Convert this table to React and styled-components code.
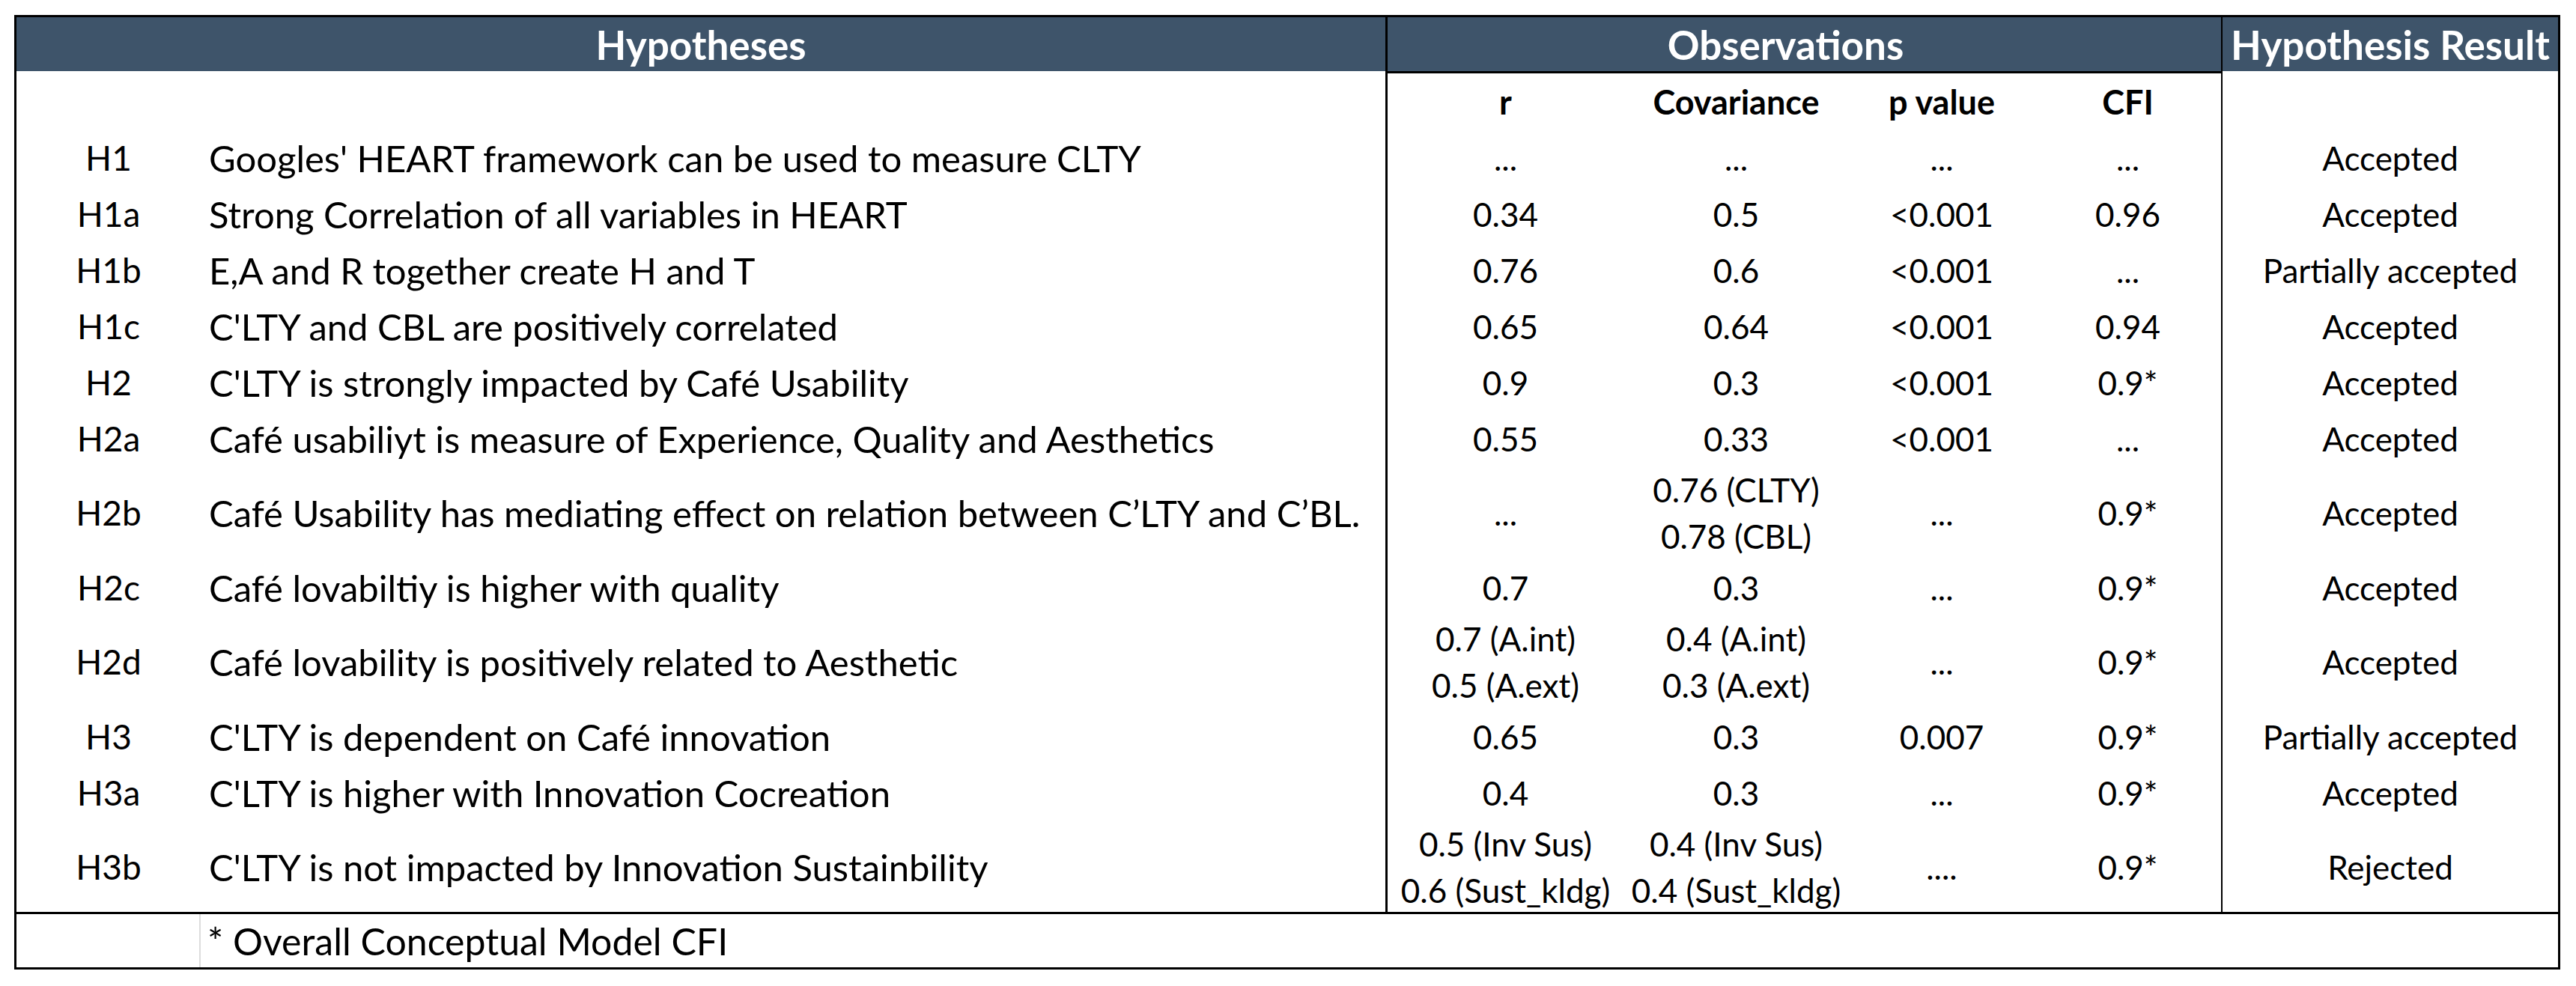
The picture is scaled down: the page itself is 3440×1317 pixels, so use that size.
import React from 'react'
import styled, { createGlobalStyle } from 'styled-components'

const GlobalStyle = createGlobalStyle`
  body {
    margin: 0;
    background: #ffffff;
    font-family: Lato, "Liberation Sans", sans-serif;
    color: #000000;
  }
`

const COLS = '246px 1582px 318px 301px 248px 249px 450px'

const Sheet = styled.div`
  margin: 20px 0 0 19px;
  width: 3400px;
  box-sizing: border-box;
  border: 3px solid #000;
`

const Row = styled.div`
  display: grid;
  grid-template-columns: ${COLS};
  height: ${props => props.h}px;
`

const HeadCell = styled.div`
  grid-column: ${props => props.span};
  background: #3e546a;
  color: #ffffff;
  font-weight: 700;
  font-size: 53px;
  display: flex;
  align-items: center;
  justify-content: center;
  box-sizing: border-box;
  padding-right: ${props => props.shift || 0}px;
  border-left: ${props => props.edge ? `${props.edge}px solid #000` : 'none'};
  white-space: nowrap;
`

const SubCell = styled.div`
  display: flex;
  align-items: center;
  justify-content: center;
  font-weight: 700;
  font-size: 45px;
  box-sizing: border-box;
  border-top: ${props => props.obs ? '3px solid #000' : 'none'};
  border-left: ${props => props.edge ? `${props.edge}px solid #000` : 'none'};
`

const Cell = styled.div`
  display: flex;
  flex-direction: column;
  align-items: ${props => props.left ? 'flex-start' : 'center'};
  justify-content: center;
  padding-left: ${props => props.left ? '11px' : '0'};
  font-size: ${props => props.size || 44}px;
  line-height: 62px;
  box-sizing: border-box;
  border-left: ${props => props.edge ? `${props.edge}px solid #000` : 'none'};
  white-space: nowrap;
`

const FootRow = styled.div`
  display: grid;
  grid-template-columns: 246px 1fr;
  height: 71px;
  border-top: 3px solid #000;
`

const FootBlank = styled.div`
  border-right: 2px solid #dcdcdc;
`

const FootNote = styled.div`
  display: flex;
  align-items: center;
  padding-left: 9px;
  font-size: 50px;
`

const rows = [
  { id: 'H1', text: "Googles' HEART framework can be used to measure CLTY", r: ['...'], cov: ['...'], p: ['...'], cfi: ['...'], res: 'Accepted', h: 75 },
  { id: 'H1a', text: 'Strong Correlation of all variables in HEART', r: ['0.34'], cov: ['0.5'], p: ['<0.001'], cfi: ['0.96'], res: 'Accepted', h: 75 },
  { id: 'H1b', text: 'E,A and R together create H and T', r: ['0.76'], cov: ['0.6'], p: ['<0.001'], cfi: ['...'], res: 'Partially accepted', h: 75 },
  { id: 'H1c', text: "C'LTY and CBL are positively correlated", r: ['0.65'], cov: ['0.64'], p: ['<0.001'], cfi: ['0.94'], res: 'Accepted', h: 75 },
  { id: 'H2', text: "C'LTY is strongly impacted by Café Usability", r: ['0.9'], cov: ['0.3'], p: ['<0.001'], cfi: ['0.9*'], res: 'Accepted', h: 75 },
  { id: 'H2a', text: 'Café usabiliyt is measure of Experience, Quality and Aesthetics', r: ['0.55'], cov: ['0.33'], p: ['<0.001'], cfi: ['...'], res: 'Accepted', h: 75 },
  { id: 'H2b', text: 'Café Usability has mediating effect on relation between C’LTY and C’BL.', r: ['...'], cov: ['0.76 (CLTY)', '0.78 (CBL)'], p: ['...'], cfi: ['0.9*'], res: 'Accepted', h: 124 },
  { id: 'H2c', text: 'Café lovabiltiy is higher with quality', r: ['0.7'], cov: ['0.3'], p: ['...'], cfi: ['0.9*'], res: 'Accepted', h: 75 },
  { id: 'H2d', text: 'Café lovability is positively related to Aesthetic', r: ['0.7 (A.int)', '0.5 (A.ext)'], cov: ['0.4 (A.int)', '0.3 (A.ext)'], p: ['...'], cfi: ['0.9*'], res: 'Accepted', h: 124 },
  { id: 'H3', text: "C'LTY is dependent on Café innovation", r: ['0.65'], cov: ['0.3'], p: ['0.007'], cfi: ['0.9*'], res: 'Partially accepted', h: 75 },
  { id: 'H3a', text: "C'LTY is higher with Innovation Cocreation", r: ['0.4'], cov: ['0.3'], p: ['...'], cfi: ['0.9*'], res: 'Accepted', h: 75 },
  { id: 'H3b', text: "C'LTY is not impacted by Innovation Sustainbility", r: ['0.5 (Inv Sus)', '0.6 (Sust_kldg)'], cov: ['0.4 (Inv Sus)', '0.4 (Sust_kldg)'], p: ['....'], cfi: ['0.9*'], res: 'Rejected', h: 122 },
]

function Lines({ items }) {
  return items.map((t, i) => <span key={i}>{t}</span>)
}

export default function App() {
  return (
    <>
      <GlobalStyle />
      <Sheet>
        <Row h={72}>
          <HeadCell span="1 / 3">Hypotheses</HeadCell>
          <HeadCell span="3 / 7" edge={3} shift={50}>Observations</HeadCell>
          <HeadCell span="7 / 8" edge={2}>Hypothesis Result</HeadCell>
        </Row>
        <Row h={78}>
          <SubCell />
          <SubCell />
          <SubCell obs edge={3}>r</SubCell>
          <SubCell obs>Covariance</SubCell>
          <SubCell obs>p value</SubCell>
          <SubCell obs>CFI</SubCell>
          <SubCell edge={2} />
        </Row>
        {rows.map(row => (
          <Row key={row.id} h={row.h}>
            <Cell size={46}>{row.id}</Cell>
            <Cell left size={49}>{row.text}</Cell>
            <Cell edge={3}><Lines items={row.r} /></Cell>
            <Cell><Lines items={row.cov} /></Cell>
            <Cell><Lines items={row.p} /></Cell>
            <Cell><Lines items={row.cfi} /></Cell>
            <Cell edge={2}>{row.res}</Cell>
          </Row>
        ))}
        <FootRow>
          <FootBlank />
          <FootNote>* Overall Conceptual Model CFI</FootNote>
        </FootRow>
      </Sheet>
    </>
  )
}
